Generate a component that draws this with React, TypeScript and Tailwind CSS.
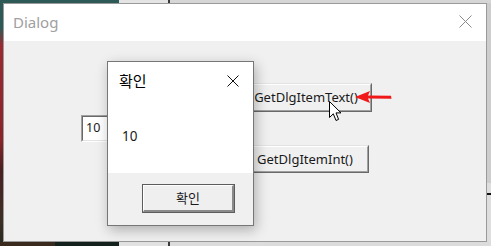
import React from "react";

const font = { fontFamily: '"Noto Sans", "Noto Sans CJK KR", sans-serif' };

function PushButton({ label, className }: { label: string; className: string }) {
  return (
    <div
      className={`border-t border-l border-t-[#e3e3e3] border-l-[#e3e3e3] border-r border-b border-r-[#696969] border-b-[#696969] ${className}`}
    >
      <div className="w-full h-full border-t border-l border-t-white border-l-white border-r border-b border-r-[#a0a0a0] border-b-[#a0a0a0] bg-[#f0f0f0] flex items-center justify-center text-[13px] text-[#1a1a1a] leading-none">
        {label}
      </div>
    </div>
  );
}

export default function App() {
  return (
    <div className="relative w-[491px] h-[246px] overflow-hidden bg-[#cfcfcf] flex flex-col" style={font}>
      {/* desktop: top strip */}
      <div className="h-[3px] flex">
        <div className="w-[3px] bg-[#2d5a56]" />
        <div className="w-[116px] bg-[#2d5a56]" />
        <div className="w-[49px] bg-[#e4e4e4]" />
        <div className="w-[2px] bg-[#3a3a3a]" />
        <div className="flex-1 bg-[#d6d6d6]" />
      </div>

      {/* middle: left desktop strip, dialog window, right strip */}
      <div className="h-[239px] flex">
        <div className="w-[3px] bg-[linear-gradient(to_bottom,#2d5a56_0px,#2d5a56_25px,#9a2a30_42px,#8a2428_137px,#4a2020_167px,#3c3024_217px,#2a2a22_239px)]" />

        <div className="w-[484px] border border-[#9a9a9a] bg-white flex flex-col">
          <div className="h-[37px] flex items-center justify-between pl-[9px] pr-[14px]">
            <span className="text-[15px] text-[#a0a0a0] leading-none -mt-[1px]">Dialog</span>
            <svg width="13" height="13" viewBox="0 0 13 13" className="-mt-[2px]">
              <path d="M0.5 0.5 L12.5 12.5 M12.5 0.5 L0.5 12.5" stroke="#8a8a8a" strokeWidth="1" />
            </svg>
          </div>
          <div className="flex-1 bg-[#f0f0f0] flex items-start">
            <div className="ml-[77px] mt-[74px] w-[70px] h-[27px] border-t border-l border-t-[#a0a0a0] border-l-[#a0a0a0] border-r border-b border-r-white border-b-white">
              <div className="w-full h-full border-t border-l border-t-[#696969] border-l-[#696969] border-r border-b border-r-[#e3e3e3] border-b-[#e3e3e3] bg-white pl-[3px] pt-[4px] text-[12.5px] leading-[14px] text-[#1a1a1a]">
                10
              </div>
            </div>
            <div className="ml-[89px] mt-[42px] flex flex-col gap-[33px]">
              <PushButton label="GetDlgItemText()" className="w-[132px] h-[29px]" />
              <PushButton label="GetDlgItemInt()" className="ml-[1px] w-[128px] h-[28px]" />
            </div>
          </div>
        </div>

        <div className="flex-1 flex flex-col bg-[#cdcdcd]">
          <div className="h-[180px]" />
          <div className="flex-1 flex flex-col bg-[#dedede]">
            <div className="h-[10px]" />
            <div className="h-[2px] bg-[#111]" />
          </div>
        </div>
      </div>

      {/* desktop: bottom strip */}
      <div className="flex-1 flex">
        <div className="w-[55px] bg-[#3a2a1e]" />
        <div className="w-[64px] bg-[#13211d]" />
        <div className="w-[49px] bg-[#e2e2e2]" />
        <div className="w-[2px] bg-[#3a3a3a]" />
        <div className="flex-1 bg-[#dcdcdc]" />
      </div>

      {/* message box window (over the dialog) */}
      <div className="absolute left-[107px] top-[61px] w-[147px] h-[165px] border border-[#767676] bg-white flex flex-col shadow-[2px_4px_12px_rgba(0,0,0,0.28)]">
        <div className="h-[111px] bg-white flex flex-col">
          <div className="h-[38px] flex items-center justify-between pl-[11px] pr-[14px]">
            <span className="text-[15px] text-black leading-none">확인</span>
            <svg width="12" height="12" viewBox="0 0 12 12">
              <path d="M0.5 0.5 L11.5 11.5 M11.5 0.5 L0.5 11.5" stroke="#111" strokeWidth="1" />
            </svg>
          </div>
          <div className="mt-[27px] pl-[14px] text-[13.5px] leading-[18px] text-[#1a1a1a]">10</div>
        </div>
        <div className="flex-1 bg-[#f0f0f0] pl-[34px] pt-[11px]">
          <div className="w-[93px] h-[29px] border border-[#5c5c5c]">
            <div className="w-full h-full border-t border-l border-t-white border-l-white border-r-2 border-b-2 border-r-[#8a8a8a] border-b-[#8a8a8a] bg-[#efefef] flex items-center justify-center text-[13px] leading-none text-[#1a1a1a]">
              확인
            </div>
          </div>
        </div>
      </div>

      {/* mouse cursor */}
      <svg className="absolute left-[329px] top-[101px]" width="14" height="22" viewBox="0 0 14 22">
        <path
          d="M0.5 0.5 L0.5 16.5 L4.3 12.8 L7 19.5 L9.6 18.4 L7 11.9 L12 11.9 Z"
          fill="white"
          stroke="black"
          strokeWidth="1"
        />
      </svg>

      {/* red annotation arrow */}
      <svg className="absolute left-[352px] top-[89px]" width="42" height="16" viewBox="0 0 42 16">
        <path d="M3 8 L18 2 L16 6.5 L39 6.8 L39.5 9.8 L16 9.5 L18 14 Z" fill="#f01818" />
      </svg>
    </div>
  );
}
